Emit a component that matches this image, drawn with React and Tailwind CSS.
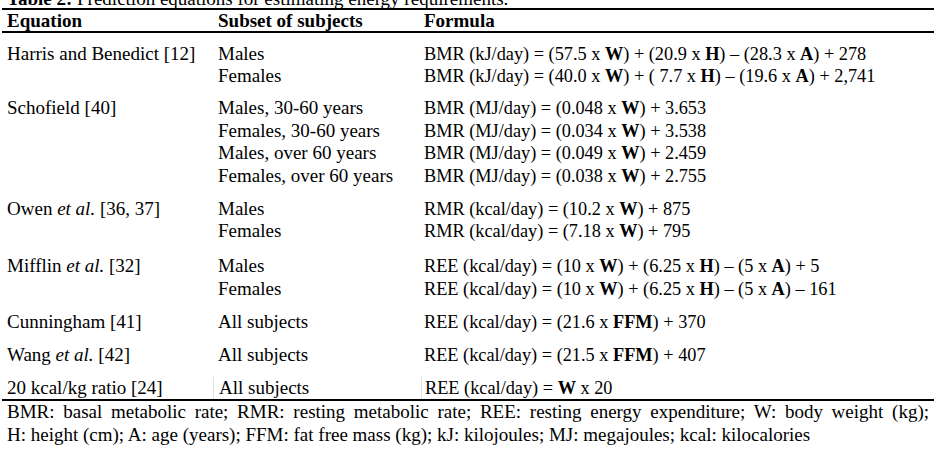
import React from "react";

// rows of the prediction table, one object per group
const groups = [
  {
    name: <>Harris and Benedict [12]</>,
    pad: "pt-[9.5px]",
    rows: [
      [
        "Males",
        <>
          BMR (kJ/day) = (57.5 x <b>W</b>) + (20.9 x <b>H</b>) – (28.3 x <b>A</b>) + 278
        </>,
      ],
      [
        "Females",
        <>
          BMR (kJ/day) = (40.0 x <b>W</b>) + ( 7.7 x <b>H</b>) – (19.6 x <b>A</b>) + 2,741
        </>,
      ],
    ],
  },
  {
    name: <>Schofield [40]</>,
    pad: "pt-[9.5px]",
    rows: [
      ["Males, 30-60 years", <>BMR (MJ/day) = (0.048 x <b>W</b>) + 3.653</>],
      ["Females, 30-60 years", <>BMR (MJ/day) = (0.034 x <b>W</b>) + 3.538</>],
      ["Males, over 60 years", <>BMR (MJ/day) = (0.049 x <b>W</b>) + 2.459</>],
      ["Females, over 60 years", <>BMR (MJ/day) = (0.038 x <b>W</b>) + 2.755</>],
    ],
  },
  {
    name: (
      <>
        Owen <i>et al.</i> [36, 37]
      </>
    ),
    pad: "pt-[10.5px]",
    rows: [
      ["Males", <>RMR (kcal/day) = (10.2 x <b>W</b>) + 875</>],
      ["Females", <>RMR (kcal/day) = (7.18 x <b>W</b>) + 795</>],
    ],
  },
  {
    name: (
      <>
        Mifflin <i>et al.</i> [32]
      </>
    ),
    pad: "pt-[12.5px]",
    rows: [
      [
        "Males",
        <>
          REE (kcal/day) = (10 x <b>W</b>) + (6.25 x <b>H</b>) – (5 x <b>A</b>) + 5
        </>,
      ],
      [
        "Females",
        <>
          REE (kcal/day) = (10 x <b>W</b>) + (6.25 x <b>H</b>) – (5 x <b>A</b>) – 161
        </>,
      ],
    ],
  },
  {
    name: <>Cunningham [41]</>,
    pad: "pt-[10.5px]",
    rows: [["All subjects", <>REE (kcal/day) = (21.6 x <b>FFM</b>) + 370</>]],
  },
  {
    name: (
      <>
        Wang <i>et al.</i> [42]
      </>
    ),
    pad: "pt-[10.5px]",
    rows: [["All subjects", <>REE (kcal/day) = (21.5 x <b>FFM</b>) + 407</>]],
  },
  {
    name: <>20 kcal/kg ratio [24]</>,
    pad: "pt-[10.5px]",
    rows: [["All subjects", <>REE (kcal/day) = <b>W</b> x 20</>]],
    last: true,
  },
];

function Group({ g }) {
  const sep = g.last ? "border-l border-[#e2e2e2]" : "";
  return (
    <div className={`grid grid-cols-[211px_208px_1fr] ${g.pad}`}>
      <div className="pl-[5px]">{g.name}</div>
      <div className={`pl-[5px] ${sep}`}>
        {g.rows.map((r, i) => (
          <div key={i}>{r[0]}</div>
        ))}
      </div>
      <div className={`pl-[3px] text-[18.3px] ${sep}`}>
        {g.rows.map((r, i) => (
          <div key={i} className="whitespace-pre">
            {r[1]}
          </div>
        ))}
      </div>
    </div>
  );
}

export default function App() {
  return (
    <div className="w-[944px] h-[458px] overflow-hidden bg-white text-black font-['Liberation_Serif','Times_New_Roman',serif] text-[19px] leading-[22.5px]">
      <div className="ml-[2px] w-[932px]">
        <div className="-mt-[10px] pl-[5px] leading-[18px] whitespace-nowrap">
          <b>Table 2:</b> Prediction equations for estimating energy requirements.
        </div>

        {/* header */}
        <div className="grid grid-cols-[211px_208px_1fr] border-y-2 border-black font-bold leading-[21px]">
          <div className="pl-[5px]">Equation</div>
          <div className="pl-[5px]">Subset of subjects</div>
          <div className="pl-[3px]">Formula</div>
        </div>

        <div className="border-b-2 border-black">
          {groups.map((g, i) => (
            <Group key={i} g={g} />
          ))}
        </div>

        {/* footnote */}
        <div className="px-[5px]">
          <div className="text-justify [text-align-last:justify]">
            BMR: basal metabolic rate; RMR: resting metabolic rate; REE: resting energy expenditure; W: body weight (kg);
          </div>
          <div>
            H: height (cm); A: age (years); FFM: fat free mass (kg); kJ: kilojoules; MJ: megajoules; kcal: kilocalories
          </div>
        </div>
      </div>
    </div>
  );
}
